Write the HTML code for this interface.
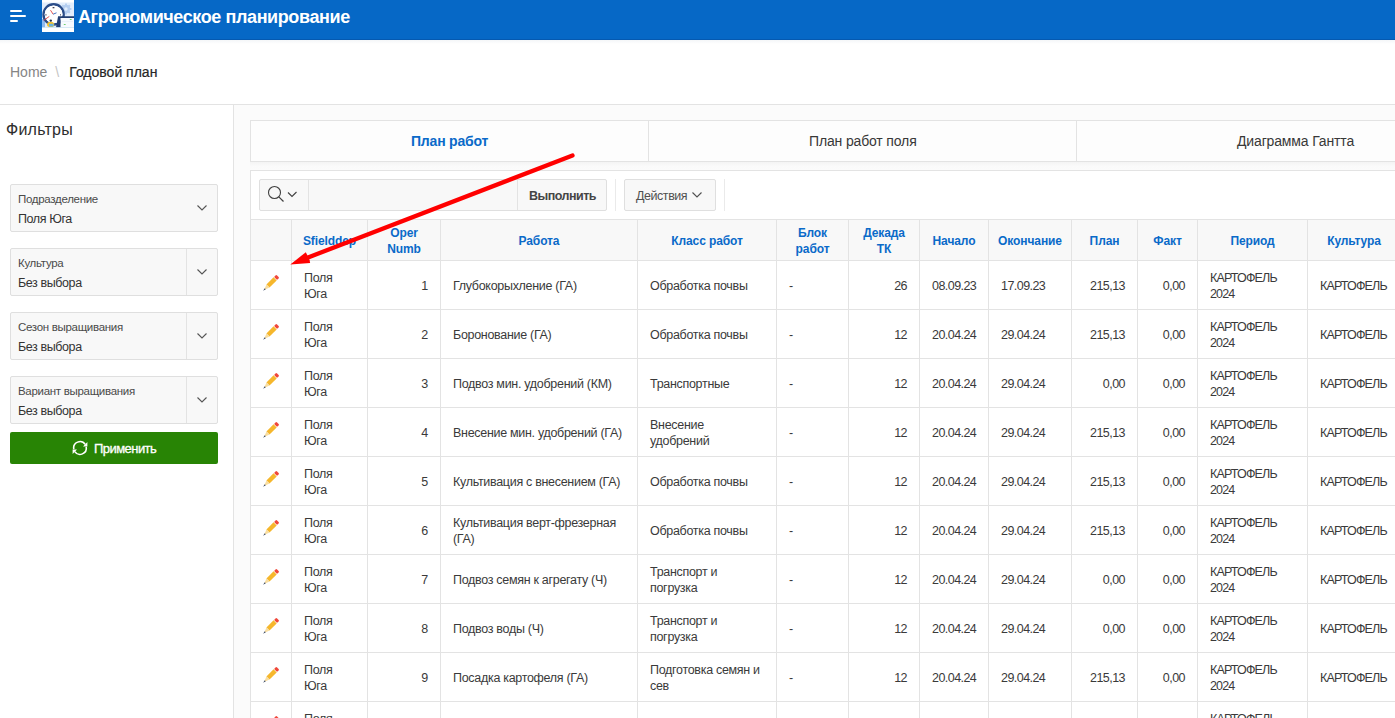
<!DOCTYPE html>
<html><head><meta charset="utf-8">
<style>
*{margin:0;padding:0;box-sizing:border-box}
html,body{width:1395px;height:718px;overflow:hidden;background:#fff;font-family:"Liberation Sans", sans-serif;color:#262626}
.abs{position:absolute}
#hdr{position:absolute;left:0;top:0;width:1395px;height:40px;background:#0668c6;border-bottom:1px solid #0559b0}
#hdrsh{position:absolute;left:0;top:40px;width:1395px;height:4px;background:linear-gradient(#f4f6f8,#fff)}
.bar{position:absolute;left:10px;height:2px;background:#fff;border-radius:1px}
#title{position:absolute;left:78px;top:6px;font-weight:bold;font-size:18px;letter-spacing:-0.4px;color:#fff;line-height:22px}
#crumb{position:absolute;left:10px;top:63px;font-size:14px;line-height:18px;white-space:nowrap}
#crumb .home{color:#858585}
#crumb .sep{color:#c4c4c4;margin:0 10px 0 8px}
#crumb .cur{color:#262626;-webkit-text-stroke:0.2px #262626;letter-spacing:0px}
#hline{position:absolute;left:0;top:104px;width:1395px;height:1px;background:#e3e3e3}
#side{position:absolute;left:0;top:105px;width:233px;height:613px;background:#fff}
#vline{position:absolute;left:233px;top:104px;width:1px;height:614px;background:#e3e3e3}
#main{position:absolute;left:234px;top:105px;width:1161px;height:613px;background:#fbfbfb}
#ftitle{position:absolute;left:6px;top:120px;font-size:16px;letter-spacing:0.25px;color:#2e2e2e;line-height:20px}
.sel{position:absolute;left:10px;width:208px;height:48px;background:#f8f8f8;border:1px solid #dfdfdf;border-radius:2px}
.sel .lb{position:absolute;left:7px;top:7px;font-size:11.5px;color:#4a4a4a;line-height:14px;letter-spacing:-0.3px;white-space:nowrap}
.sel .vl{position:absolute;left:7px;top:27px;font-size:12.5px;color:#333;line-height:15px;letter-spacing:-0.4px;white-space:nowrap}
.sel .dv{position:absolute;left:175px;top:0;width:1px;height:46px;background:#e3e3e3}
.sel svg{position:absolute;left:185px;top:19px}
#apply{position:absolute;left:10px;top:432px;width:208px;height:32px;background:#288405;border-radius:2px;color:#fff}
#apply span{position:absolute;left:84px;top:9px;font-size:13px;-webkit-text-stroke:0.3px #fff;letter-spacing:-0.55px;line-height:16px}
#apply svg{position:absolute;left:72px;top:441px}
#tabs{position:absolute;left:250px;top:120px;width:1160px;height:42px;background:#fdfdfd;border:1px solid #e3e3e3;border-right:none}
#tabsh{position:absolute;left:250px;top:162px;width:1145px;height:8px;background:linear-gradient(#f4f4f4,#fafafa 50%,#fbfbfb)}
.tdiv{position:absolute;top:0;width:1px;height:40px;background:#e3e3e3}
.tab{position:absolute;top:12px;font-size:14px;line-height:17px;white-space:nowrap;color:#383838;letter-spacing:-0.15px}
#ir{position:absolute;left:250px;top:170px;width:1160px;height:560px;background:#fff;border:1px solid #e3e3e3;border-right:none}
.btn{position:absolute;top:179px;height:32px;background:#f8f8f8;border:1px solid #dfdfdf;border-radius:2px}
.tsep{position:absolute;top:179px;width:1px;height:32px;background:#eaeaea}
.c{position:absolute;border-left:1px solid #e3e3e3;border-top:1px solid #e3e3e3;display:flex;align-items:center;overflow:hidden}
.c span{display:block;width:100%}
.hd{background:#f8f8f8;justify-content:center;text-align:center}
.hd span{color:#0a6ac9;font-weight:bold;font-size:12px;line-height:16px;letter-spacing:-0.1px;position:relative;top:1px}
.td span{font-size:12.5px;line-height:16px;color:#3a3a3a;letter-spacing:-0.3px;padding:0 12px 0 12px;position:relative;top:1px}
.td.n span{letter-spacing:-0.55px}
.td.caps span{letter-spacing:-0.85px}
.td.r span{text-align:right}
.td.ctr span{text-align:center;padding:0;position:static}
.td.ctr svg{position:absolute;left:9px;top:11px}
#arrow{position:absolute;left:0;top:0}
</style></head><body>
<div id="hdr">
 <div class="bar" style="top:10px;width:12px"></div>
 <div class="bar" style="top:15px;width:16px"></div>
 <div class="bar" style="top:20px;width:8px"></div>
 <svg class="abs" style="left:42px;top:0" width="32" height="32" viewBox="0 0 32 32">
  <rect width="32" height="32" fill="#fff"/>
  <rect x="0" y="2.5" width="32" height="25" fill="#e2edfb"/>
  <g fill="#b5cef0"><circle cx="24" cy="9" r="4.2"/><rect x="23" y="3.6" width="2" height="10.8"/><rect x="18.6" y="8" width="10.8" height="2"/><rect x="23" y="3.6" width="2" height="10.8" transform="rotate(45 24 9)"/><rect x="23" y="3.6" width="2" height="10.8" transform="rotate(-45 24 9)"/></g>
  <circle cx="24" cy="9" r="1.7" fill="#e2edfb"/>
  <rect x="0" y="19" width="3" height="8.5" fill="#8db9ee"/>
  <circle cx="11.6" cy="14.4" r="10.1" fill="none" stroke="#2a4c88" stroke-width="2.4"/>
  <circle cx="11.6" cy="14.4" r="8.9" fill="#fff"/>
  <rect x="10.6" y="7" width="1.8" height="1.3" fill="#445"/>
  <rect x="3.4" y="14.2" width="1.1" height="1.3" fill="#445"/>
  <rect x="18.1" y="14.2" width="0.9" height="1.3" fill="#445"/>
  <path d="M8.5 10.2 L11.1 14.2" stroke="#e3413c" stroke-width="0.9"/>
  <path d="M11.1 14.2 L14.5 12.8" stroke="#2e63b8" stroke-width="0.9"/>
  <path d="M7.3 16.4 L1.7 20.4" stroke="#e3413c" stroke-width="0.9"/>
  <path d="M16.1 16.2 L32 16.2 L32 18 L18.7 18 L18.7 27.5 L14 27.5 Z" fill="#223f73"/>
  <rect x="18.7" y="18" width="13.3" height="9.2" fill="#f7faff"/>
  <rect x="20" y="21" width="11" height="0.5" fill="#dfe8f5"/>
  <rect x="27.8" y="19" width="1.8" height="1" fill="#6fcf6f"/>
  <rect x="21.8" y="24" width="1.8" height="1" fill="#6fcf6f"/>
  <ellipse cx="8.6" cy="24.4" rx="3.6" ry="2.6" fill="#f1c233"/>
  <rect x="7" y="23.8" width="4.5" height="2.7" fill="#69b3df"/>
  <circle cx="8.8" cy="20.6" r="1.2" fill="#23304a"/>
  <rect x="0" y="27.2" width="32" height="0.8" fill="#cfe6f3"/>
 </svg>
 <div id="title">Агрономическое планирование</div>
</div>
<div id="hdrsh"></div>
<div id="crumb"><span class="home">Home</span><span class="sep">\</span><span class="cur">Годовой план</span></div>
<div id="hline"></div>
<div id="side"></div>
<div id="vline"></div>
<div id="main"></div>
<div id="ftitle">Фильтры</div>
<div class="sel" style="top:184px"><div class="lb">Подразделение</div><div class="vl">Поля Юга</div><svg width="12" height="8" viewBox="0 0 12 8"><path d="M1.5 1.5 L6 6 L10.5 1.5" stroke="#555" stroke-width="1.1" fill="none"/></svg></div>
<div class="sel" style="top:248px"><div class="lb">Культура</div><div class="vl">Без выбора</div><div class="dv"></div><svg width="12" height="8" viewBox="0 0 12 8"><path d="M1.5 1.5 L6 6 L10.5 1.5" stroke="#555" stroke-width="1.1" fill="none"/></svg></div>
<div class="sel" style="top:312px"><div class="lb">Сезон выращивания</div><div class="vl">Без выбора</div><div class="dv"></div><svg width="12" height="8" viewBox="0 0 12 8"><path d="M1.5 1.5 L6 6 L10.5 1.5" stroke="#555" stroke-width="1.1" fill="none"/></svg></div>
<div class="sel" style="top:376px"><div class="lb">Вариант выращивания</div><div class="vl">Без выбора</div><div class="dv"></div><svg width="12" height="8" viewBox="0 0 12 8"><path d="M1.5 1.5 L6 6 L10.5 1.5" stroke="#555" stroke-width="1.1" fill="none"/></svg></div>
<div id="apply"><span>Применить</span></div>
<svg class="abs" style="left:71px;top:440px" width="18" height="17" viewBox="0 0 18 17">
 <path d="M2.8 9.1 A6.3 6.3 0 0 1 14.2 4.4" stroke="#fff" stroke-width="1.6" fill="none"/>
 <path d="M15.2 6.9 A6.3 6.3 0 0 1 3.8 11.6" stroke="#fff" stroke-width="1.6" fill="none"/>
 <path d="M16.4 2.0 L16.4 6.4 L12 6.4 Z" fill="#fff"/>
 <path d="M1.6 14.0 L1.6 9.6 L6 9.6 Z" fill="#fff"/>
</svg>
<div id="tabs">
 <div class="tdiv" style="left:397px"></div>
 <div class="tdiv" style="left:825px"></div>
 <div class="tab" style="left:160px;color:#0a6ac9;font-weight:bold;letter-spacing:-0.2px">План работ</div>
 <div class="tab" style="left:558px">План работ поля</div>
 <div class="tab" style="left:986px">Диаграмма Гантта</div>
</div>
<div id="tabsh"></div>
<div id="ir"></div>
<div class="btn" style="left:259px;width:348px"></div>
<div class="abs" style="left:308px;top:180px;width:1px;height:30px;background:#e3e3e3"></div>
<div class="abs" style="left:517px;top:180px;width:1px;height:30px;background:#e3e3e3"></div>
<svg class="abs" style="left:264px;top:183px" width="36" height="24" viewBox="0 0 36 24">
 <circle cx="10.5" cy="9.5" r="6" stroke="#404040" stroke-width="1.1" fill="none"/>
 <path d="M14.8 13.8 L19.5 18.5" stroke="#404040" stroke-width="1.2"/>
 <path d="M24 9.5 L28 13.5 L32.5 9" stroke="#404040" stroke-width="1.1" fill="none"/>
</svg>
<div class="abs" style="left:529px;top:188px;font-size:12.5px;font-weight:bold;color:#454545;letter-spacing:-0.5px;line-height:16px">Выполнить</div>
<div class="tsep" style="left:615px"></div>
<div class="btn" style="left:624px;width:92px"></div>
<div class="abs" style="left:636px;top:188px;font-size:12.5px;color:#505050;letter-spacing:-0.45px;line-height:16px">Действия</div>
<svg class="abs" style="left:691px;top:191px" width="12" height="8" viewBox="0 0 12 8"><path d="M1.5 1.5 L6 6 L10.5 1.5" stroke="#505050" stroke-width="1.1" fill="none"/></svg>
<div class="tsep" style="left:724px"></div>
<div class="c hd" style="left:250px;top:219px;width:41px;height:41px"><span></span></div>
<div class="c hd" style="left:291px;top:219px;width:76px;height:41px"><span>Sfielddep</span></div>
<div class="c hd" style="left:367px;top:219px;width:73px;height:41px"><span>Oper<br>Numb</span></div>
<div class="c hd" style="left:440px;top:219px;width:197px;height:41px"><span>Работа</span></div>
<div class="c hd" style="left:637px;top:219px;width:139px;height:41px"><span>Класс работ</span></div>
<div class="c hd" style="left:776px;top:219px;width:72px;height:41px"><span>Блок<br>работ</span></div>
<div class="c hd" style="left:848px;top:219px;width:71px;height:41px"><span>Декада<br>ТК</span></div>
<div class="c hd" style="left:919px;top:219px;width:69px;height:41px"><span>Начало</span></div>
<div class="c hd" style="left:988px;top:219px;width:83px;height:41px"><span>Окончание</span></div>
<div class="c hd" style="left:1071px;top:219px;width:66px;height:41px"><span>План</span></div>
<div class="c hd" style="left:1137px;top:219px;width:60px;height:41px"><span>Факт</span></div>
<div class="c hd" style="left:1197px;top:219px;width:110px;height:41px"><span>Период</span></div>
<div class="c hd" style="left:1307px;top:219px;width:93px;height:41px"><span>Культура</span></div>
<div class="c td ctr" style="left:250px;top:260px;width:41px;height:49px"><span><svg width="24" height="24" viewBox="0 0 24 24" class="pen"><g transform="translate(10.4 11.6) scale(0.95) rotate(45) translate(-12 -12)">
<rect x="9.7" y="0.9" width="4.6" height="3.6" fill="#f0473a" rx="1.2"/>
<rect x="9.7" y="4.5" width="4.6" height="0.5" fill="#fbe3d0"/>
<rect x="9.7" y="5" width="4.6" height="10.6" fill="#f6b72c"/>
<path d="M9.7 15.6 L14.3 15.6 L12 21.4 Z" fill="#f8dda0"/>
<path d="M11.3 19.6 L12.7 19.6 L12 22.8 Z" fill="#2c3e5e"/>
</g></svg></span></div>
<div class="c td l" style="left:291px;top:260px;width:76px;height:49px"><span>Поля<br>Юга</span></div>
<div class="c td r" style="left:367px;top:260px;width:73px;height:49px"><span>1</span></div>
<div class="c td l" style="left:440px;top:260px;width:197px;height:49px"><span>Глубокорыхление (ГА)</span></div>
<div class="c td l" style="left:637px;top:260px;width:139px;height:49px"><span>Обработка почвы</span></div>
<div class="c td l" style="left:776px;top:260px;width:72px;height:49px"><span>-</span></div>
<div class="c td r n" style="left:848px;top:260px;width:71px;height:49px"><span>26</span></div>
<div class="c td l n" style="left:919px;top:260px;width:69px;height:49px"><span>08.09.23</span></div>
<div class="c td l n" style="left:988px;top:260px;width:83px;height:49px"><span>17.09.23</span></div>
<div class="c td r n" style="left:1071px;top:260px;width:66px;height:49px"><span>215,13</span></div>
<div class="c td r n" style="left:1137px;top:260px;width:60px;height:49px"><span>0,00</span></div>
<div class="c td l caps" style="left:1197px;top:260px;width:110px;height:49px"><span>КАРТОФЕЛЬ<br>2024</span></div>
<div class="c td l caps" style="left:1307px;top:260px;width:93px;height:49px"><span>КАРТОФЕЛЬ</span></div>
<div class="c td ctr" style="left:250px;top:309px;width:41px;height:49px"><span><svg width="24" height="24" viewBox="0 0 24 24" class="pen"><g transform="translate(10.4 11.6) scale(0.95) rotate(45) translate(-12 -12)">
<rect x="9.7" y="0.9" width="4.6" height="3.6" fill="#f0473a" rx="1.2"/>
<rect x="9.7" y="4.5" width="4.6" height="0.5" fill="#fbe3d0"/>
<rect x="9.7" y="5" width="4.6" height="10.6" fill="#f6b72c"/>
<path d="M9.7 15.6 L14.3 15.6 L12 21.4 Z" fill="#f8dda0"/>
<path d="M11.3 19.6 L12.7 19.6 L12 22.8 Z" fill="#2c3e5e"/>
</g></svg></span></div>
<div class="c td l" style="left:291px;top:309px;width:76px;height:49px"><span>Поля<br>Юга</span></div>
<div class="c td r" style="left:367px;top:309px;width:73px;height:49px"><span>2</span></div>
<div class="c td l" style="left:440px;top:309px;width:197px;height:49px"><span>Боронование (ГА)</span></div>
<div class="c td l" style="left:637px;top:309px;width:139px;height:49px"><span>Обработка почвы</span></div>
<div class="c td l" style="left:776px;top:309px;width:72px;height:49px"><span>-</span></div>
<div class="c td r n" style="left:848px;top:309px;width:71px;height:49px"><span>12</span></div>
<div class="c td l n" style="left:919px;top:309px;width:69px;height:49px"><span>20.04.24</span></div>
<div class="c td l n" style="left:988px;top:309px;width:83px;height:49px"><span>29.04.24</span></div>
<div class="c td r n" style="left:1071px;top:309px;width:66px;height:49px"><span>215,13</span></div>
<div class="c td r n" style="left:1137px;top:309px;width:60px;height:49px"><span>0,00</span></div>
<div class="c td l caps" style="left:1197px;top:309px;width:110px;height:49px"><span>КАРТОФЕЛЬ<br>2024</span></div>
<div class="c td l caps" style="left:1307px;top:309px;width:93px;height:49px"><span>КАРТОФЕЛЬ</span></div>
<div class="c td ctr" style="left:250px;top:358px;width:41px;height:49px"><span><svg width="24" height="24" viewBox="0 0 24 24" class="pen"><g transform="translate(10.4 11.6) scale(0.95) rotate(45) translate(-12 -12)">
<rect x="9.7" y="0.9" width="4.6" height="3.6" fill="#f0473a" rx="1.2"/>
<rect x="9.7" y="4.5" width="4.6" height="0.5" fill="#fbe3d0"/>
<rect x="9.7" y="5" width="4.6" height="10.6" fill="#f6b72c"/>
<path d="M9.7 15.6 L14.3 15.6 L12 21.4 Z" fill="#f8dda0"/>
<path d="M11.3 19.6 L12.7 19.6 L12 22.8 Z" fill="#2c3e5e"/>
</g></svg></span></div>
<div class="c td l" style="left:291px;top:358px;width:76px;height:49px"><span>Поля<br>Юга</span></div>
<div class="c td r" style="left:367px;top:358px;width:73px;height:49px"><span>3</span></div>
<div class="c td l" style="left:440px;top:358px;width:197px;height:49px"><span>Подвоз мин. удобрений (КМ)</span></div>
<div class="c td l" style="left:637px;top:358px;width:139px;height:49px"><span>Транспортные</span></div>
<div class="c td l" style="left:776px;top:358px;width:72px;height:49px"><span>-</span></div>
<div class="c td r n" style="left:848px;top:358px;width:71px;height:49px"><span>12</span></div>
<div class="c td l n" style="left:919px;top:358px;width:69px;height:49px"><span>20.04.24</span></div>
<div class="c td l n" style="left:988px;top:358px;width:83px;height:49px"><span>29.04.24</span></div>
<div class="c td r n" style="left:1071px;top:358px;width:66px;height:49px"><span>0,00</span></div>
<div class="c td r n" style="left:1137px;top:358px;width:60px;height:49px"><span>0,00</span></div>
<div class="c td l caps" style="left:1197px;top:358px;width:110px;height:49px"><span>КАРТОФЕЛЬ<br>2024</span></div>
<div class="c td l caps" style="left:1307px;top:358px;width:93px;height:49px"><span>КАРТОФЕЛЬ</span></div>
<div class="c td ctr" style="left:250px;top:407px;width:41px;height:49px"><span><svg width="24" height="24" viewBox="0 0 24 24" class="pen"><g transform="translate(10.4 11.6) scale(0.95) rotate(45) translate(-12 -12)">
<rect x="9.7" y="0.9" width="4.6" height="3.6" fill="#f0473a" rx="1.2"/>
<rect x="9.7" y="4.5" width="4.6" height="0.5" fill="#fbe3d0"/>
<rect x="9.7" y="5" width="4.6" height="10.6" fill="#f6b72c"/>
<path d="M9.7 15.6 L14.3 15.6 L12 21.4 Z" fill="#f8dda0"/>
<path d="M11.3 19.6 L12.7 19.6 L12 22.8 Z" fill="#2c3e5e"/>
</g></svg></span></div>
<div class="c td l" style="left:291px;top:407px;width:76px;height:49px"><span>Поля<br>Юга</span></div>
<div class="c td r" style="left:367px;top:407px;width:73px;height:49px"><span>4</span></div>
<div class="c td l" style="left:440px;top:407px;width:197px;height:49px"><span>Внесение мин. удобрений (ГА)</span></div>
<div class="c td l" style="left:637px;top:407px;width:139px;height:49px"><span>Внесение<br>удобрений</span></div>
<div class="c td l" style="left:776px;top:407px;width:72px;height:49px"><span>-</span></div>
<div class="c td r n" style="left:848px;top:407px;width:71px;height:49px"><span>12</span></div>
<div class="c td l n" style="left:919px;top:407px;width:69px;height:49px"><span>20.04.24</span></div>
<div class="c td l n" style="left:988px;top:407px;width:83px;height:49px"><span>29.04.24</span></div>
<div class="c td r n" style="left:1071px;top:407px;width:66px;height:49px"><span>215,13</span></div>
<div class="c td r n" style="left:1137px;top:407px;width:60px;height:49px"><span>0,00</span></div>
<div class="c td l caps" style="left:1197px;top:407px;width:110px;height:49px"><span>КАРТОФЕЛЬ<br>2024</span></div>
<div class="c td l caps" style="left:1307px;top:407px;width:93px;height:49px"><span>КАРТОФЕЛЬ</span></div>
<div class="c td ctr" style="left:250px;top:456px;width:41px;height:49px"><span><svg width="24" height="24" viewBox="0 0 24 24" class="pen"><g transform="translate(10.4 11.6) scale(0.95) rotate(45) translate(-12 -12)">
<rect x="9.7" y="0.9" width="4.6" height="3.6" fill="#f0473a" rx="1.2"/>
<rect x="9.7" y="4.5" width="4.6" height="0.5" fill="#fbe3d0"/>
<rect x="9.7" y="5" width="4.6" height="10.6" fill="#f6b72c"/>
<path d="M9.7 15.6 L14.3 15.6 L12 21.4 Z" fill="#f8dda0"/>
<path d="M11.3 19.6 L12.7 19.6 L12 22.8 Z" fill="#2c3e5e"/>
</g></svg></span></div>
<div class="c td l" style="left:291px;top:456px;width:76px;height:49px"><span>Поля<br>Юга</span></div>
<div class="c td r" style="left:367px;top:456px;width:73px;height:49px"><span>5</span></div>
<div class="c td l" style="left:440px;top:456px;width:197px;height:49px"><span>Культивация с внесением (ГА)</span></div>
<div class="c td l" style="left:637px;top:456px;width:139px;height:49px"><span>Обработка почвы</span></div>
<div class="c td l" style="left:776px;top:456px;width:72px;height:49px"><span>-</span></div>
<div class="c td r n" style="left:848px;top:456px;width:71px;height:49px"><span>12</span></div>
<div class="c td l n" style="left:919px;top:456px;width:69px;height:49px"><span>20.04.24</span></div>
<div class="c td l n" style="left:988px;top:456px;width:83px;height:49px"><span>29.04.24</span></div>
<div class="c td r n" style="left:1071px;top:456px;width:66px;height:49px"><span>215,13</span></div>
<div class="c td r n" style="left:1137px;top:456px;width:60px;height:49px"><span>0,00</span></div>
<div class="c td l caps" style="left:1197px;top:456px;width:110px;height:49px"><span>КАРТОФЕЛЬ<br>2024</span></div>
<div class="c td l caps" style="left:1307px;top:456px;width:93px;height:49px"><span>КАРТОФЕЛЬ</span></div>
<div class="c td ctr" style="left:250px;top:505px;width:41px;height:49px"><span><svg width="24" height="24" viewBox="0 0 24 24" class="pen"><g transform="translate(10.4 11.6) scale(0.95) rotate(45) translate(-12 -12)">
<rect x="9.7" y="0.9" width="4.6" height="3.6" fill="#f0473a" rx="1.2"/>
<rect x="9.7" y="4.5" width="4.6" height="0.5" fill="#fbe3d0"/>
<rect x="9.7" y="5" width="4.6" height="10.6" fill="#f6b72c"/>
<path d="M9.7 15.6 L14.3 15.6 L12 21.4 Z" fill="#f8dda0"/>
<path d="M11.3 19.6 L12.7 19.6 L12 22.8 Z" fill="#2c3e5e"/>
</g></svg></span></div>
<div class="c td l" style="left:291px;top:505px;width:76px;height:49px"><span>Поля<br>Юга</span></div>
<div class="c td r" style="left:367px;top:505px;width:73px;height:49px"><span>6</span></div>
<div class="c td l" style="left:440px;top:505px;width:197px;height:49px"><span>Культивация верт-фрезерная<br>(ГА)</span></div>
<div class="c td l" style="left:637px;top:505px;width:139px;height:49px"><span>Обработка почвы</span></div>
<div class="c td l" style="left:776px;top:505px;width:72px;height:49px"><span>-</span></div>
<div class="c td r n" style="left:848px;top:505px;width:71px;height:49px"><span>12</span></div>
<div class="c td l n" style="left:919px;top:505px;width:69px;height:49px"><span>20.04.24</span></div>
<div class="c td l n" style="left:988px;top:505px;width:83px;height:49px"><span>29.04.24</span></div>
<div class="c td r n" style="left:1071px;top:505px;width:66px;height:49px"><span>215,13</span></div>
<div class="c td r n" style="left:1137px;top:505px;width:60px;height:49px"><span>0,00</span></div>
<div class="c td l caps" style="left:1197px;top:505px;width:110px;height:49px"><span>КАРТОФЕЛЬ<br>2024</span></div>
<div class="c td l caps" style="left:1307px;top:505px;width:93px;height:49px"><span>КАРТОФЕЛЬ</span></div>
<div class="c td ctr" style="left:250px;top:554px;width:41px;height:49px"><span><svg width="24" height="24" viewBox="0 0 24 24" class="pen"><g transform="translate(10.4 11.6) scale(0.95) rotate(45) translate(-12 -12)">
<rect x="9.7" y="0.9" width="4.6" height="3.6" fill="#f0473a" rx="1.2"/>
<rect x="9.7" y="4.5" width="4.6" height="0.5" fill="#fbe3d0"/>
<rect x="9.7" y="5" width="4.6" height="10.6" fill="#f6b72c"/>
<path d="M9.7 15.6 L14.3 15.6 L12 21.4 Z" fill="#f8dda0"/>
<path d="M11.3 19.6 L12.7 19.6 L12 22.8 Z" fill="#2c3e5e"/>
</g></svg></span></div>
<div class="c td l" style="left:291px;top:554px;width:76px;height:49px"><span>Поля<br>Юга</span></div>
<div class="c td r" style="left:367px;top:554px;width:73px;height:49px"><span>7</span></div>
<div class="c td l" style="left:440px;top:554px;width:197px;height:49px"><span>Подвоз семян к агрегату (Ч)</span></div>
<div class="c td l" style="left:637px;top:554px;width:139px;height:49px"><span>Транспорт и<br>погрузка</span></div>
<div class="c td l" style="left:776px;top:554px;width:72px;height:49px"><span>-</span></div>
<div class="c td r n" style="left:848px;top:554px;width:71px;height:49px"><span>12</span></div>
<div class="c td l n" style="left:919px;top:554px;width:69px;height:49px"><span>20.04.24</span></div>
<div class="c td l n" style="left:988px;top:554px;width:83px;height:49px"><span>29.04.24</span></div>
<div class="c td r n" style="left:1071px;top:554px;width:66px;height:49px"><span>0,00</span></div>
<div class="c td r n" style="left:1137px;top:554px;width:60px;height:49px"><span>0,00</span></div>
<div class="c td l caps" style="left:1197px;top:554px;width:110px;height:49px"><span>КАРТОФЕЛЬ<br>2024</span></div>
<div class="c td l caps" style="left:1307px;top:554px;width:93px;height:49px"><span>КАРТОФЕЛЬ</span></div>
<div class="c td ctr" style="left:250px;top:603px;width:41px;height:49px"><span><svg width="24" height="24" viewBox="0 0 24 24" class="pen"><g transform="translate(10.4 11.6) scale(0.95) rotate(45) translate(-12 -12)">
<rect x="9.7" y="0.9" width="4.6" height="3.6" fill="#f0473a" rx="1.2"/>
<rect x="9.7" y="4.5" width="4.6" height="0.5" fill="#fbe3d0"/>
<rect x="9.7" y="5" width="4.6" height="10.6" fill="#f6b72c"/>
<path d="M9.7 15.6 L14.3 15.6 L12 21.4 Z" fill="#f8dda0"/>
<path d="M11.3 19.6 L12.7 19.6 L12 22.8 Z" fill="#2c3e5e"/>
</g></svg></span></div>
<div class="c td l" style="left:291px;top:603px;width:76px;height:49px"><span>Поля<br>Юга</span></div>
<div class="c td r" style="left:367px;top:603px;width:73px;height:49px"><span>8</span></div>
<div class="c td l" style="left:440px;top:603px;width:197px;height:49px"><span>Подвоз воды (Ч)</span></div>
<div class="c td l" style="left:637px;top:603px;width:139px;height:49px"><span>Транспорт и<br>погрузка</span></div>
<div class="c td l" style="left:776px;top:603px;width:72px;height:49px"><span>-</span></div>
<div class="c td r n" style="left:848px;top:603px;width:71px;height:49px"><span>12</span></div>
<div class="c td l n" style="left:919px;top:603px;width:69px;height:49px"><span>20.04.24</span></div>
<div class="c td l n" style="left:988px;top:603px;width:83px;height:49px"><span>29.04.24</span></div>
<div class="c td r n" style="left:1071px;top:603px;width:66px;height:49px"><span>0,00</span></div>
<div class="c td r n" style="left:1137px;top:603px;width:60px;height:49px"><span>0,00</span></div>
<div class="c td l caps" style="left:1197px;top:603px;width:110px;height:49px"><span>КАРТОФЕЛЬ<br>2024</span></div>
<div class="c td l caps" style="left:1307px;top:603px;width:93px;height:49px"><span>КАРТОФЕЛЬ</span></div>
<div class="c td ctr" style="left:250px;top:652px;width:41px;height:49px"><span><svg width="24" height="24" viewBox="0 0 24 24" class="pen"><g transform="translate(10.4 11.6) scale(0.95) rotate(45) translate(-12 -12)">
<rect x="9.7" y="0.9" width="4.6" height="3.6" fill="#f0473a" rx="1.2"/>
<rect x="9.7" y="4.5" width="4.6" height="0.5" fill="#fbe3d0"/>
<rect x="9.7" y="5" width="4.6" height="10.6" fill="#f6b72c"/>
<path d="M9.7 15.6 L14.3 15.6 L12 21.4 Z" fill="#f8dda0"/>
<path d="M11.3 19.6 L12.7 19.6 L12 22.8 Z" fill="#2c3e5e"/>
</g></svg></span></div>
<div class="c td l" style="left:291px;top:652px;width:76px;height:49px"><span>Поля<br>Юга</span></div>
<div class="c td r" style="left:367px;top:652px;width:73px;height:49px"><span>9</span></div>
<div class="c td l" style="left:440px;top:652px;width:197px;height:49px"><span>Посадка картофеля (ГА)</span></div>
<div class="c td l" style="left:637px;top:652px;width:139px;height:49px"><span>Подготовка семян и<br>сев</span></div>
<div class="c td l" style="left:776px;top:652px;width:72px;height:49px"><span>-</span></div>
<div class="c td r n" style="left:848px;top:652px;width:71px;height:49px"><span>12</span></div>
<div class="c td l n" style="left:919px;top:652px;width:69px;height:49px"><span>20.04.24</span></div>
<div class="c td l n" style="left:988px;top:652px;width:83px;height:49px"><span>29.04.24</span></div>
<div class="c td r n" style="left:1071px;top:652px;width:66px;height:49px"><span>215,13</span></div>
<div class="c td r n" style="left:1137px;top:652px;width:60px;height:49px"><span>0,00</span></div>
<div class="c td l caps" style="left:1197px;top:652px;width:110px;height:49px"><span>КАРТОФЕЛЬ<br>2024</span></div>
<div class="c td l caps" style="left:1307px;top:652px;width:93px;height:49px"><span>КАРТОФЕЛЬ</span></div>
<div class="c td ctr" style="left:250px;top:701px;width:41px;height:49px"><span><svg width="24" height="24" viewBox="0 0 24 24" class="pen"><g transform="translate(10.4 11.6) scale(0.95) rotate(45) translate(-12 -12)">
<rect x="9.7" y="0.9" width="4.6" height="3.6" fill="#f0473a" rx="1.2"/>
<rect x="9.7" y="4.5" width="4.6" height="0.5" fill="#fbe3d0"/>
<rect x="9.7" y="5" width="4.6" height="10.6" fill="#f6b72c"/>
<path d="M9.7 15.6 L14.3 15.6 L12 21.4 Z" fill="#f8dda0"/>
<path d="M11.3 19.6 L12.7 19.6 L12 22.8 Z" fill="#2c3e5e"/>
</g></svg></span></div>
<div class="c td l" style="left:291px;top:701px;width:76px;height:49px"><span>Поля<br>Юга</span></div>
<div class="c td r" style="left:367px;top:701px;width:73px;height:49px"><span></span></div>
<div class="c td l" style="left:440px;top:701px;width:197px;height:49px"><span></span></div>
<div class="c td l" style="left:637px;top:701px;width:139px;height:49px"><span></span></div>
<div class="c td l" style="left:776px;top:701px;width:72px;height:49px"><span></span></div>
<div class="c td r n" style="left:848px;top:701px;width:71px;height:49px"><span></span></div>
<div class="c td l n" style="left:919px;top:701px;width:69px;height:49px"><span></span></div>
<div class="c td l n" style="left:988px;top:701px;width:83px;height:49px"><span></span></div>
<div class="c td r n" style="left:1071px;top:701px;width:66px;height:49px"><span></span></div>
<div class="c td r n" style="left:1137px;top:701px;width:60px;height:49px"><span></span></div>
<div class="c td l caps" style="left:1197px;top:701px;width:110px;height:49px"><span>КАРТОФЕЛЬ<br>2024</span></div>
<div class="c td l caps" style="left:1307px;top:701px;width:93px;height:49px"><span>КАРТОФЕЛЬ</span></div>
<svg id="arrow" width="1395" height="718" viewBox="0 0 1395 718">
 <path d="M572.5 155.5 L308 257.5" stroke="#f00" stroke-width="4.3" stroke-linecap="round"/>
 <path d="M290.3 264.6 L305.8 252.2 L307.5 255.4 L309.6 260.2 L310.1 263 Z" fill="#f00"/>
</svg>
</body></html>
